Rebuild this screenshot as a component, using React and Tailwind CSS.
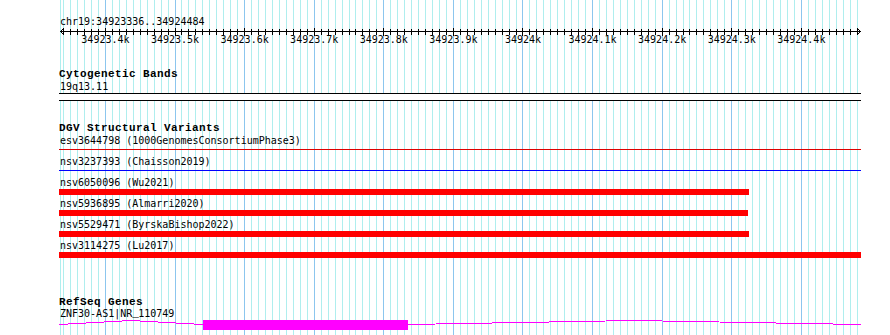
const START = 34923336;
const END = 34924484;
const X0 = 60.9;
const PX = 0.6959;
const xOf = (bp) => X0 + (bp - START) * PX;
const px = (x) => Math.floor(x) + 0.5;

const ticks = [];
for (let bp = 34923340; bp <= END; bp += 10) ticks.push(bp);

const majorLabel = (bp) => {
    const k = bp / 1000;
    return (Number.isInteger(k) ? String(k) : k.toFixed(1)) + 'k';
};

const variants = [
    { id: 'esv3644798', study: '1000GenomesConsortiumPhase3', kind: 'line', color: '#dd0000' },
    { id: 'nsv3237393', study: 'Chaisson2019', kind: 'line', color: '#0000ff' },
    { id: 'nsv6050096', study: 'Wu2021', kind: 'bar', end: 749 },
    { id: 'nsv5936895', study: 'Almarri2020', kind: 'bar', end: 748 },
    { id: 'nsv5529471', study: 'ByrskaBishop2022', kind: 'bar', end: 749 },
    { id: 'nsv3114275', study: 'Lu2017', kind: 'bar', end: 861 },
];

const Grid = () => (
    <svg className="absolute left-0 top-0" width="890" height="335" shapeRendering="crispEdges">
        <line x1="60.5" y1="0" x2="60.5" y2="335" stroke="#afeeee" />
        {ticks.map((bp) => (
            <line
                key={bp}
                x1={px(xOf(bp))}
                y1="0"
                x2={px(xOf(bp))}
                y2="335"
                stroke={bp % 100 === 0 ? '#8cc6ee' : '#afeeee'}
            />
        ))}
    </svg>
);

const Ruler = () => (
    <svg className="block" width="890" height="18" shapeRendering="crispEdges">
        <line x1="60" y1="3.5" x2="861" y2="3.5" stroke="#000" />
        <polyline points="63.5,0.5 60.5,3.5 63.5,6.5" fill="none" stroke="#000" />
        <polyline points="857.5,0.5 860.5,3.5 857.5,6.5" fill="none" stroke="#000" />
        {ticks.map((bp) => {
            const x = px(xOf(bp));
            const major = bp % 100 === 0;
            return <line key={bp} x1={x} y1={major ? 0 : 1} x2={x} y2={major ? 8 : 7} stroke="#000" />;
        })}
        {ticks.filter((bp) => bp % 100 === 0).map((bp) => (
            <text
                key={bp}
                x={xOf(bp)}
                y="15"
                textAnchor="middle"
                fontFamily="DejaVu Sans Mono, monospace"
                fontSize="10"
                fill="#000"
            >
                {majorLabel(bp)}
            </text>
        ))}
    </svg>
);

const TrackTitle = ({ children }) => (
    <div className="h-[13px] pl-[59px] font-['Liberation_Mono',monospace] text-[11px] leading-[13px] font-bold tracking-[0.4px] whitespace-nowrap">
        {children}
    </div>
);

const Label = ({ children, h = 'h-[12px] leading-[12px]', font = '' }) => (
    <div className={`${h} ${font} relative z-10 pl-[60px] text-[10px] whitespace-nowrap`}>{children}</div>
);

const App = () => {
    return (
        <div className="relative w-[890px] h-[335px] overflow-hidden bg-white text-black font-['DejaVu_Sans_Mono',monospace]">
            <Grid />
            <div className="relative flex flex-col pt-[16px]">
                <Label>chr19:34923336..34924484</Label>
                <Ruler />

                <div className="mt-[22px] flex flex-col">
                    <TrackTitle>Cytogenetic Bands</TrackTitle>
                    <Label>19q13.11</Label>
                    <div className="ml-[59px] h-[8px] w-[802px] border-y border-black bg-white" />
                </div>

                <div className="mt-[21px] flex flex-col">
                    <TrackTitle>DGV Structural Variants</TrackTitle>
                    {variants.map((v) => (
                        <div key={v.id} className="flex h-[21px] flex-col">
                            <Label>{v.id} ({v.study})</Label>
                            <div className="ml-[59px] h-[6px]">
                                {v.kind === 'bar' ? (
                                    <div className="h-[6px] bg-[#ff0000]" style={{ width: v.end - 59 }} />
                                ) : (
                                    <div className="mt-[2px] h-px w-[802px]" style={{ backgroundColor: v.color }} />
                                )}
                            </div>
                        </div>
                    ))}
                </div>

                <div className="mt-[35px] flex flex-col">
                    <TrackTitle>RefSeq Genes</TrackTitle>
                    <Label h="h-[11px] leading-[9px]">
                        ZNF30-AS1|NR<span className="font-['Liberation_Mono',monospace] text-[11px] tracking-[-0.6px]">_</span>110749
                    </Label>
                    <svg className="block" width="890" height="10" shapeRendering="crispEdges">
                        <polyline points="59,4.5 131,0.5 203,4.5" fill="none" stroke="#ff00ff" />
                        <polyline points="408,4.5 634,0.5 861,4.5" fill="none" stroke="#ff00ff" />
                        <rect x="203" y="0" width="205" height="10" fill="#ff00ff" />
                    </svg>
                </div>
            </div>
        </div>
    );
};

export default App;
